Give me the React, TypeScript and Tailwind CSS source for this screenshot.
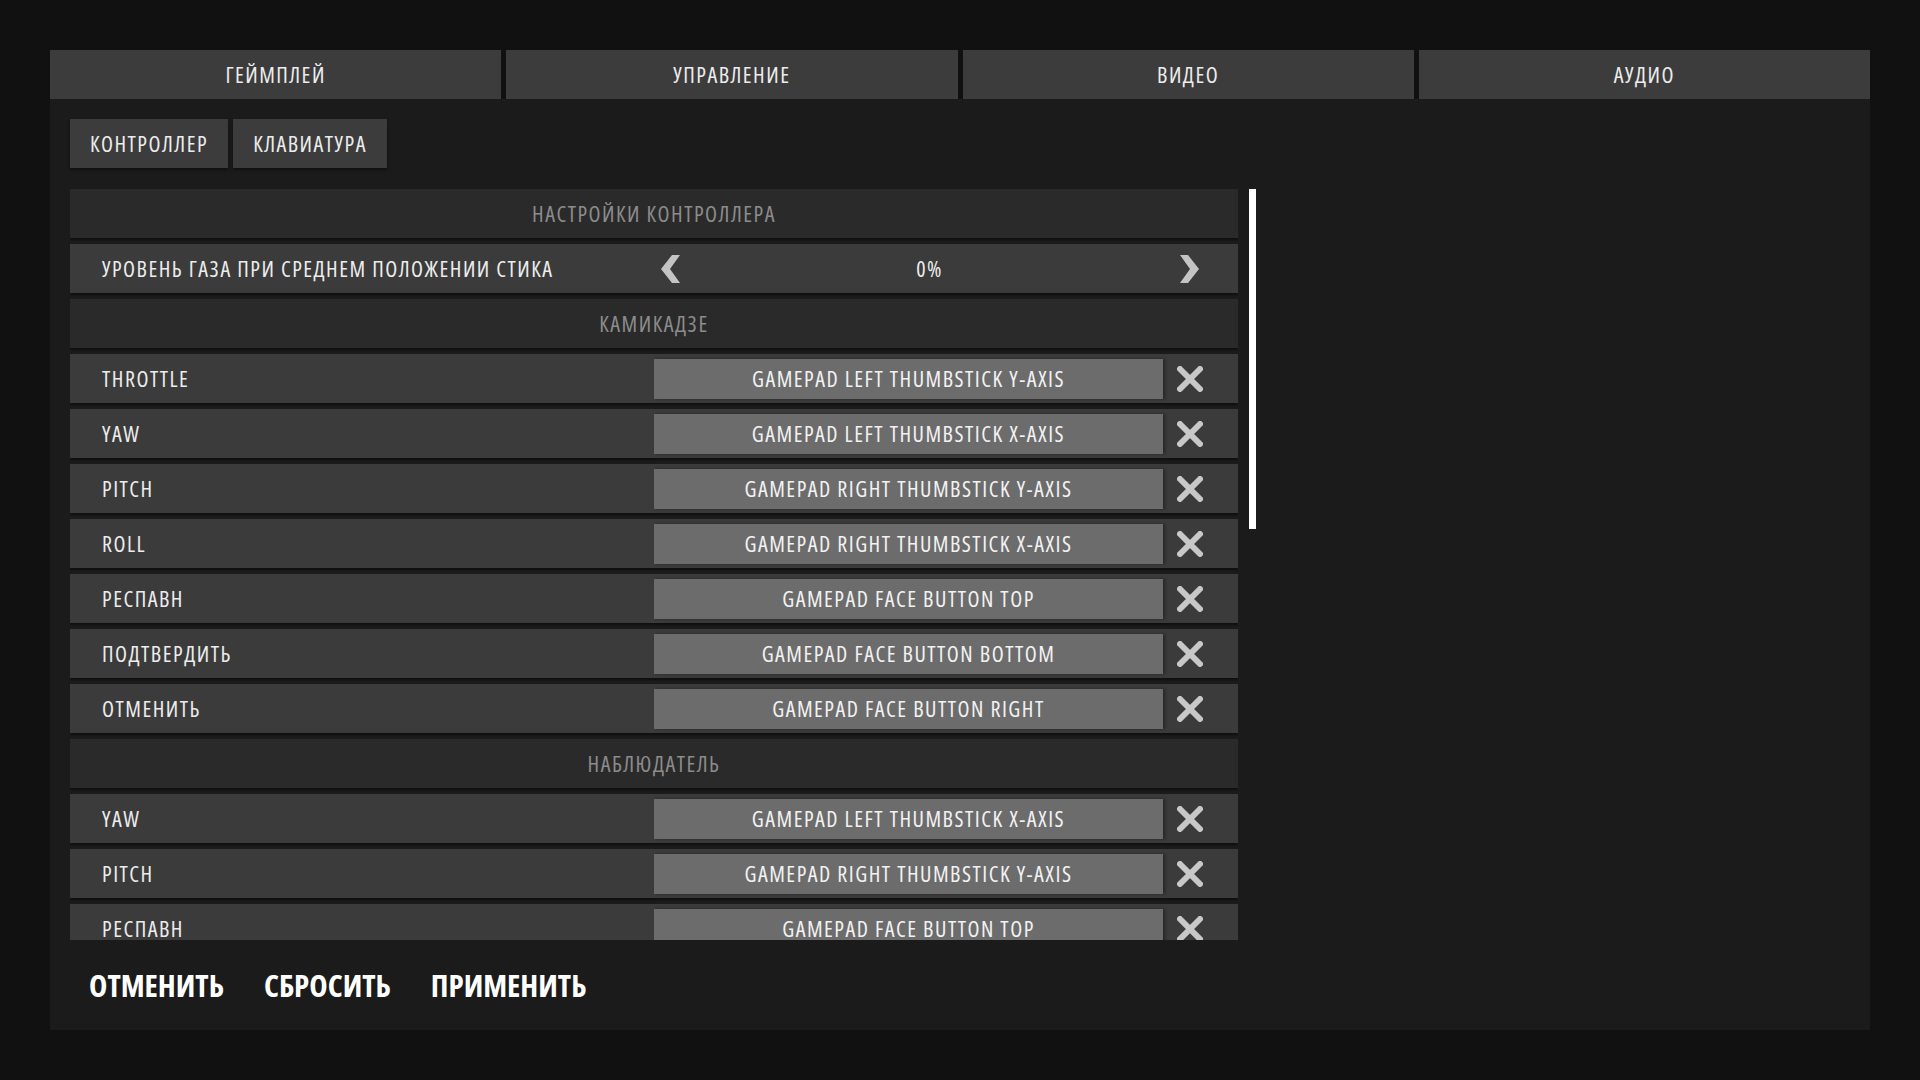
import React from "react";

function ChevronLeft() {
  return (
    <svg width="19" height="28" viewBox="0 0 19 28">
      <polygon points="11,0 19,0 9,14 19,28 11,28 0,14" fill="#c4c4c4" />
    </svg>
  );
}
function ChevronRight() {
  return (
    <svg width="19" height="28" viewBox="0 0 19 28">
      <polygon points="8,0 0,0 10,14 0,28 8,28 19,14" fill="#c4c4c4" />
    </svg>
  );
}
function XIcon() {
  return (
    <svg width="26" height="26" viewBox="0 0 26 26">
      <path d="M3 3 L23 23 M23 3 L3 23" stroke="#c8c8c8" strokeWidth="6" strokeLinecap="round" />
    </svg>
  );
}

type Row =
  | { kind: "header"; text: string }
  | { kind: "value"; label: string; value: string }
  | { kind: "bind"; label: string; value: string };

const rows: Row[] = [
  { kind: "header", text: "НАСТРОЙКИ КОНТРОЛЛЕРА" },
  { kind: "value", label: "УРОВЕНЬ ГАЗА ПРИ СРЕДНЕМ ПОЛОЖЕНИИ СТИКА", value: "0%" },
  { kind: "header", text: "КАМИКАДЗЕ" },
  { kind: "bind", label: "THROTTLE", value: "GAMEPAD LEFT THUMBSTICK Y-AXIS" },
  { kind: "bind", label: "YAW", value: "GAMEPAD LEFT THUMBSTICK X-AXIS" },
  { kind: "bind", label: "PITCH", value: "GAMEPAD RIGHT THUMBSTICK Y-AXIS" },
  { kind: "bind", label: "ROLL", value: "GAMEPAD RIGHT THUMBSTICK X-AXIS" },
  { kind: "bind", label: "РЕСПАВН", value: "GAMEPAD FACE BUTTON TOP" },
  { kind: "bind", label: "ПОДТВЕРДИТЬ", value: "GAMEPAD FACE BUTTON BOTTOM" },
  { kind: "bind", label: "ОТМЕНИТЬ", value: "GAMEPAD FACE BUTTON RIGHT" },
  { kind: "header", text: "НАБЛЮДАТЕЛЬ" },
  { kind: "bind", label: "YAW", value: "GAMEPAD LEFT THUMBSTICK X-AXIS" },
  { kind: "bind", label: "PITCH", value: "GAMEPAD RIGHT THUMBSTICK Y-AXIS" },
  { kind: "bind", label: "РЕСПАВН", value: "GAMEPAD FACE BUTTON TOP" },
];

function RowView({ row }: { row: Row }) {
  if (row.kind === "header") {
    return (
      <div className="h-[49px] shrink-0 bg-[#2a2a2a] flex items-center justify-center text-[22px] text-[#8c8c8c] shadow-[0_2px_2px_rgba(0,0,0,0.45)]">
        {row.text}
      </div>
    );
  }
  if (row.kind === "value") {
    return (
      <div className="h-[49px] shrink-0 bg-[#3b3b3b] flex items-center text-[22px] text-[#ececec] shadow-[0_2px_2px_rgba(0,0,0,0.45)]">
        <div className="w-[584px] pl-[32px]">{row.label}</div>
        <div className="w-[584px] pr-[33px] flex items-center">
          <div className="w-[32px] flex justify-center">
            <ChevronLeft />
          </div>
          <div className="flex-1 text-center">{row.value}</div>
          <div className="w-[32px] flex justify-center">
            <ChevronRight />
          </div>
        </div>
      </div>
    );
  }
  return (
    <div className="h-[49px] shrink-0 bg-[#3b3b3b] flex items-center text-[22px] text-[#ececec] shadow-[0_2px_2px_rgba(0,0,0,0.45)]">
      <div className="w-[584px] pl-[32px]">{row.label}</div>
      <div className="w-[509px] h-[40px] bg-[#6c6c6c] flex items-center justify-center text-[#f2f2f2] shadow-[2px_0_3px_rgba(0,0,0,0.35)]">
        {row.value}
      </div>
      <div className="w-[54px] flex justify-center">
        <XIcon />
      </div>
    </div>
  );
}

export default function App() {
  return (
    <div className="w-[1920px] h-[1080px] bg-[#111111] pt-[50px] pl-[50px] overflow-hidden font-['Open_Sans',sans-serif] font-stretch-condensed font-normal tracking-[1.5px]">
      <div className="w-[1820px] flex flex-col">
        <div className="h-[49px] flex gap-[5px]">
          {["ГЕЙМПЛЕЙ", "УПРАВЛЕНИЕ", "ВИДЕО", "АУДИО"].map((t) => (
            <div key={t} className="flex-1 bg-[#3c3c3c] flex items-center justify-center text-[22px] text-[#ececec]">
              {t}
            </div>
          ))}
        </div>
        <div className="h-[931px] bg-[#1b1b1b] px-[20px] pt-[20px] flex flex-col">
          <div className="flex gap-[5px] h-[49px]">
            <div className="w-[158px] bg-[#3c3c3c] flex items-center justify-center text-[22px] text-[#ececec] shadow-[0_2px_3px_rgba(0,0,0,0.45)]">
              КОНТРОЛЛЕР
            </div>
            <div className="w-[154px] bg-[#3c3c3c] flex items-center justify-center text-[22px] text-[#ececec] shadow-[0_2px_3px_rgba(0,0,0,0.45)]">
              КЛАВИАТУРА
            </div>
          </div>
          <div className="mt-[21px] flex items-start gap-[11px]">
            <div className="w-[1168px] h-[751px] overflow-hidden flex flex-col gap-[6px]">
              {rows.map((r, i) => (
                <RowView key={i} row={r} />
              ))}
            </div>
            <div className="w-[7px] h-[340px] bg-white" />
          </div>
          <div className="mt-[22px] flex gap-[40px] pl-[19px] text-[31px] font-bold tracking-normal text-white">
            <span>ОТМЕНИТЬ</span>
            <span>СБРОСИТЬ</span>
            <span>ПРИМЕНИТЬ</span>
          </div>
        </div>
      </div>
    </div>
  );
}
